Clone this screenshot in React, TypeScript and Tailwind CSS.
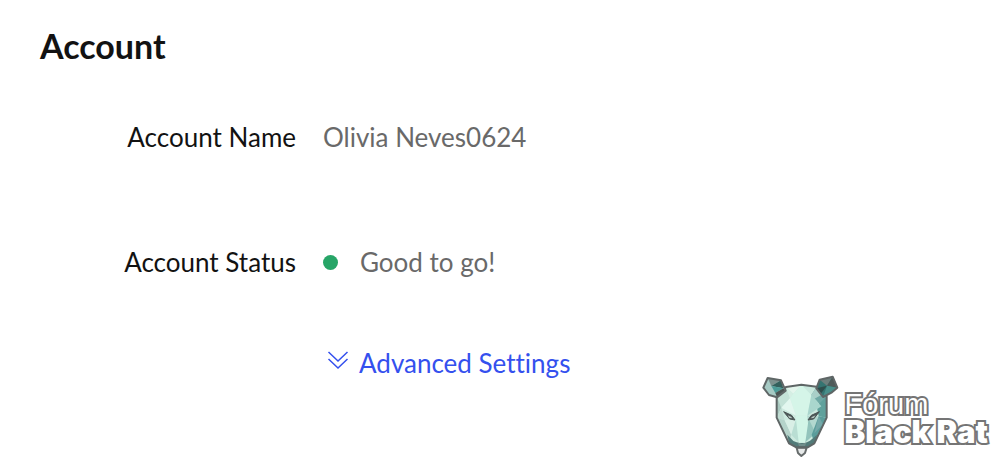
import type { ReactNode } from 'react'

function ChevronsDown() {
  return (
    <svg viewBox="0 0 22 20" className="mb-1.5 w-[22px] h-5 shrink-0" fill="none" stroke="currentColor" strokeWidth="1.5" aria-hidden="true">
      <path d="M1.5 2 11 11 20.5 2" />
      <path d="M1.5 9 11 18 20.5 9" />
    </svg>
  )
}

function RatHead() {
  return (
    <svg viewBox="36 28 231 249" className="w-[77px] h-[83px] shrink-0" strokeLinejoin="round" aria-hidden="true">
      {/* chin */}
      <path d="M140 246 144 262 154 271 165 262 170 246Z" fill="#e6e9e9" stroke="#666b6b" strokeWidth="6" />
      {/* skull */}
      <path d="M80 92 108 64 154 57 200 63 230 92 230 156 193 233 173 245 139 245 117 233 80 156Z" fill="#cdeadf" />
      <path d="M80 92 108 64 120 98 94 126Z" fill="#c4e2d7" />
      <path d="M108 64 154 57 130 84Z" fill="#e4f6ed" />
      <path d="M108 64 130 84 120 98Z" fill="#d5efe4" />
      <path d="M154 57 200 63 184 88Z" fill="#c9e9de" />
      <path d="M130 84 154 57 184 88 172 150 138 150 120 98Z" fill="#d5f5e8" />
      <path d="M120 98 138 150 94 126Z" fill="#e3f7ef" />
      <path d="M200 63 230 92 214 122 184 88Z" fill="#6fa9a5" />
      <path d="M200 63 184 88 192 100 218 86Z" fill="#a9cfc8" />
      <path d="M230 92 230 156 206 152 200 122Z" fill="#5fa19c" />
      <path d="M184 88 214 122 172 150Z" fill="#a9d6cd" />
      <path d="M80 92 94 126 80 156Z" fill="#a9c9c0" />
      <path d="M94 126 104 164 80 156Z" fill="#c0dcd2" />
      <path d="M80 156 104 164 124 207 117 233Z" fill="#b5d3ca" />
      <path d="M104 164 138 160 124 207Z" fill="#d9efe6" />
      <path d="M138 150 172 150 176 195 166 230 146 230 130 198Z" fill="#d2f5e7" />
      <path d="M138 160 146 230 124 207Z" fill="#b9ded3" />
      <path d="M172 150 206 152 193 203 176 195Z" fill="#b2d8cf" />
      <path d="M176 160 197 203 166 230Z" fill="#93c4bc" />
      <path d="M206 152 230 156 193 233 185 207Z" fill="#5b9d9b" />
      <path d="M206 152 219 176 193 203Z" fill="#75a9a9" />
      <path d="M112 207 130 226 146 232 166 232 180 225 201 207 193 233 173 245 139 245 117 233Z" fill="#527b79" />
      <path d="M142 230 156 235 170 230 165 241 147 241Z" fill="#718e8b" />
      {/* eyes */}
      <path d="M101 138 125 149 135 163 119 160Z" fill="#4b5555" stroke="#4b5555" strokeWidth="3" />
      <path d="M113 149 123 153 127 158 118 157Z" fill="#b9cac4" />
      <path d="M208 138 184 149 174 163 191 160Z" fill="#4b5555" stroke="#4b5555" strokeWidth="3" />
      <path d="M197 149 187 153 182 158 191 157Z" fill="#b9cac4" />
      <path d="M80 92 108 64 154 57 200 63 230 92 230 156 193 233 173 245 139 245 117 233 80 156Z" fill="none" stroke="#5f6666" strokeWidth="6" />
      {/* left ear */}
      <path d="M40 66 53 37 93 44 107 75 81 95 57 88Z" fill="#a6cac4" />
      <path d="M53 37 93 44 64 61Z" fill="#7d918e" />
      <path d="M64 61 93 44 100 68Z" fill="#34605c" />
      <path d="M64 61 100 68 76 82Z" fill="#4c9c98" />
      <path d="M76 82 100 68 106 76 81 95Z" fill="#4a5553" />
      <path d="M40 66 53 37 93 44 107 75 81 95 57 88Z" fill="none" stroke="#5f6666" strokeWidth="6" />
      {/* right ear */}
      <path d="M199 68 209 42 248 33 262 66 246 80 219 94Z" fill="#357471" />
      <path d="M209 42 248 33 231 60Z" fill="#6d7e7c" />
      <path d="M248 33 262 66 231 60Z" fill="#4f5b5a" />
      <path d="M199 68 231 60 214 82Z" fill="#2f4e4c" />
      <path d="M231 60 262 66 219 94Z" fill="#498f8a" />
      <path d="M199 68 209 42 248 33 262 66 246 80 219 94Z" fill="none" stroke="#5f6666" strokeWidth="6" />
    </svg>
  )
}

function Row({ label, children }: { label: string; children: ReactNode }) {
  return (
    <div className="flex items-center gap-[27px]">
      <dt className="w-64 shrink-0 text-right text-[#121212]">{label}</dt>
      <dd className="flex items-center text-[#696969]">{children}</dd>
    </div>
  )
}

export default function App() {
  return (
    <main className="relative bg-white px-10 pt-[26px] pb-[75px] font-['Lato',sans-serif] text-[26px] leading-10 [font-variant-ligatures:none]">
      <h1 className="text-[34px] font-bold leading-10 text-[#121212]">Account</h1>
      <dl className="mt-[51px] flex flex-col gap-[85px]">
        <Row label="Account Name">Olivia Neves0624</Row>
        <Row label="Account Status">
          <span className="mr-[22px] size-[15px] rounded-full bg-[#27a567]" />
          Good to go!
        </Row>
      </dl>
      <div className="mt-[61px] ml-[287px] flex">
        <button type="button" className="flex items-center gap-[10px] text-[#3450ee]">
          <ChevronsDown />
          Advanced Settings
        </button>
      </div>

      <div className="absolute right-3 bottom-0 flex items-center">
        <RatHead />
        <div className="ml-1.5 pt-0.5 text-white whitespace-nowrap [paint-order:stroke_fill] [-webkit-text-stroke:4px_#757575]">
          <div className="font-['Liberation_Sans',sans-serif] text-[29px] leading-7">Fórum</div>
          <div className="font-['Inter',sans-serif] text-[31px] font-black leading-7">Black Rat</div>
        </div>
      </div>
    </main>
  )
}
